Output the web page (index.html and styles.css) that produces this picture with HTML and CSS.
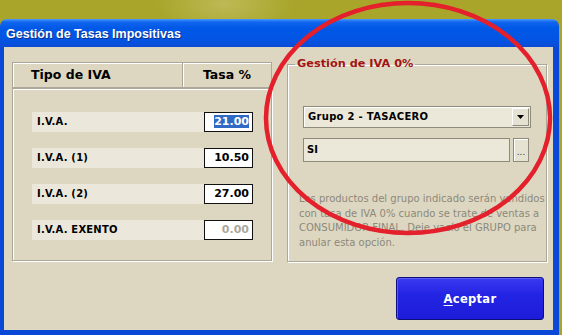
FILE: index.html
```html
<!DOCTYPE html>
<html lang="es">
<head>
  <meta charset="UTF-8">
  <title>Gestión de Tasas Impositivas</title>
  <link rel="stylesheet" href="styles.css">
</head>
<body>
  <div class="window">
    <div class="titlebar">Gestión de Tasas Impositivas</div>
    <div class="frame">
      <div class="panels">
        <div class="rates">
          <div class="rates-head">
            <div class="cell cell-type">Tipo de IVA</div>
            <div class="cell cell-rate">Tasa %</div>
          </div>
          <div class="rates-body">
            <div class="rate-row">
              <span class="rate-label">I.V.A.</span>
              <span class="rate-input"><span class="selected">21.00</span></span>
            </div>
            <div class="rate-row">
              <span class="rate-label">I.V.A. (1)</span>
              <span class="rate-input">10.50</span>
            </div>
            <div class="rate-row">
              <span class="rate-label">I.V.A. (2)</span>
              <span class="rate-input">27.00</span>
            </div>
            <div class="rate-row">
              <span class="rate-label">I.V.A. EXENTO</span>
              <span class="rate-input disabled">0.00</span>
            </div>
          </div>
        </div>

        <fieldset class="zero-group">
          <legend>Gestión de IVA 0%</legend>
          <div class="combo">
            <span class="combo-text">Grupo 2 - TASACERO</span>
            <span class="combo-btn">
              <svg width="7" height="4" viewBox="0 0 7 4"><polygon points="0,0 7,0 3.5,4" fill="#000"/></svg>
            </span>
          </div>
          <div class="lookup">
            <span class="lookup-field">SI</span>
            <span class="lookup-btn">...</span>
          </div>
          <p class="note">Los productos del grupo indicado serán vendidos<br>con tasa de IVA 0% cuando se trate de ventas a<br>CONSUMIDOR FINAL. Deje vacío el GRUPO para<br>anular esta opción.</p>
        </fieldset>
      </div>

      <div class="actions">
        <button class="btn-ok"><u>A</u>ceptar</button>
      </div>
    </div>
  </div>

  <!-- marca roja a mano alzada -->
  <svg class="mark" width="562" height="335" viewBox="0 0 562 335">
    <ellipse cx="408" cy="118" rx="142" ry="115" fill="none" stroke="#e3202b" stroke-width="4.5"/>
  </svg>
</body>
</html>
```

FILE: styles.css
```css
* {
  box-sizing: border-box;
}
html, body {
  margin: 0;
}
body {
  position: relative;
  width: 562px;
  height: 335px;
  overflow: hidden;
  background: radial-gradient(ellipse 70px 30px at 225px 4px, #beb955, transparent), #a8a52a;
  font-family: "DejaVu Sans", sans-serif;
}
.window {
  margin-top: 19px;
  width: 559px;
}
.titlebar {
  height: 28px;
  padding: 3px 0 0 6px;
  border-radius: 7px 7px 0 0;
  background: linear-gradient(#4a9aff 0, #1266ee 3px, #0058e6 9px, #0355e4 20px, #0a4bd6 28px);
  color: #fff;
  font: bold 12.5px/25px "Liberation Sans", sans-serif;
  text-shadow: 1px 1px 0 #0b2e8c;
}
.frame {
  height: 288px;
  background: #ddd7c1;
  border-style: solid;
  border-color: #0a48d8;
  border-width: 0 6px 5px 4px;
  padding: 15px 0 10px 8px;
}
.panels {
  display: flex;
  align-items: flex-start;
  height: 200px;
}

/* tabla de tasas */
.rates {
  width: 260px;
  height: 199px;
  display: flex;
  flex-direction: column;
}
.rates-head {
  display: flex;
  height: 26px;
}
.cell {
  border: 1px solid #aca899;
  box-shadow: inset 1px 1px 0 #fff;
  font: bold 12.5px/24px "DejaVu Sans", sans-serif;
  color: #000;
}
.cell-type {
  width: 171px;
  padding-left: 18px;
}
.cell-rate {
  flex: 1;
  border-left: none;
  text-align: center;
}
.rates-body {
  flex: 1;
  border: 1px solid #aca899;
  box-shadow: inset 1px 1px 0 #fff, 1px 1px 0 #fff;
  padding: 23px 18px 0 19px;
  display: flex;
  flex-direction: column;
  gap: 16px;
}
.rate-row {
  display: flex;
  height: 20px;
}
.rate-label {
  flex: 1;
  background: #ebe8db;
  padding-left: 5px;
  font: bold 10px/20px "DejaVu Sans", sans-serif;
  letter-spacing: 0.2px;
}
.rate-input {
  width: 49px;
  background: #fff;
  border: 1px solid #111;
  text-align: right;
  padding-right: 3px;
  font: bold 11px/18px "DejaVu Sans", sans-serif;
}
.selected {
  background: #316ac5;
  color: #fff;
}
.disabled {
  color: #aca899;
}

/* grupo IVA 0% */
.zero-group {
  width: 260px;
  height: 205px;
  margin: -5px 0 0 15px;
  padding: 35px 15px 0 15px;
  border: 1px solid #aca899;
  box-shadow: inset 1px 1px 0 #fff, 1px 1px 0 #fff;
}
.zero-group legend {
  margin-left: -8px;
  padding: 0 2px;
  color: #a01414;
  font: bold 11.3px/14px "DejaVu Sans", sans-serif;
}
.combo {
  display: flex;
  height: 22px;
  background: #ebe8da;
  border: 1px solid #8e8b7d;
  box-shadow: inset 1px 1px 0 #fff;
}
.combo-text {
  flex: 1;
  padding-left: 4px;
  font: bold 10px/20px "DejaVu Sans", sans-serif;
  letter-spacing: 0.3px;
}
.combo-btn {
  width: 17px;
  margin: 1px;
  display: flex;
  align-items: center;
  justify-content: center;
  background: #e6e2d2;
  border: 1px solid;
  border-color: #fff #8e8b7d #8e8b7d #fff;
}
.lookup {
  display: flex;
  gap: 3px;
  height: 24px;
  margin-top: 10px;
}
.lookup-field {
  flex: 1;
  background: #ebe8da;
  border: 1px solid #8e8b7d;
  padding-left: 3px;
  font: bold 10px/22px "DejaVu Sans", sans-serif;
}
.lookup-btn {
  width: 16px;
  margin-right: 2px;
  background: #e6e2d2;
  border: 1px solid #8e8b7d;
  box-shadow: inset 1px 1px 0 #fff;
  text-align: center;
  font: 9px/26px "DejaVu Sans", sans-serif;
  color: #333;
}
.note {
  margin: 30px -14px 0 -4px;
  white-space: nowrap;
  color: #8c897b;
  font: 10px/14.5px "DejaVu Sans", sans-serif;
}

/* boton */
.actions {
  display: flex;
  justify-content: flex-end;
  margin-top: 15px;
  padding-right: 9px;
}
.btn-ok {
  width: 148px;
  height: 43px;
  border: 1px solid #0e0e78;
  border-radius: 3px;
  background: linear-gradient(#3a3af0, #2424e4 40%, #1c1cd8);
  box-shadow: inset 1px 1px 0 #5a5af5;
  color: #fff;
  font: bold 11.5px "DejaVu Sans", sans-serif;
  letter-spacing: 0.3px;
}
.btn-ok u {
  text-underline-offset: 2px;
}

.mark {
  position: absolute;
  top: 0;
  left: 0;
  pointer-events: none;
}
```
